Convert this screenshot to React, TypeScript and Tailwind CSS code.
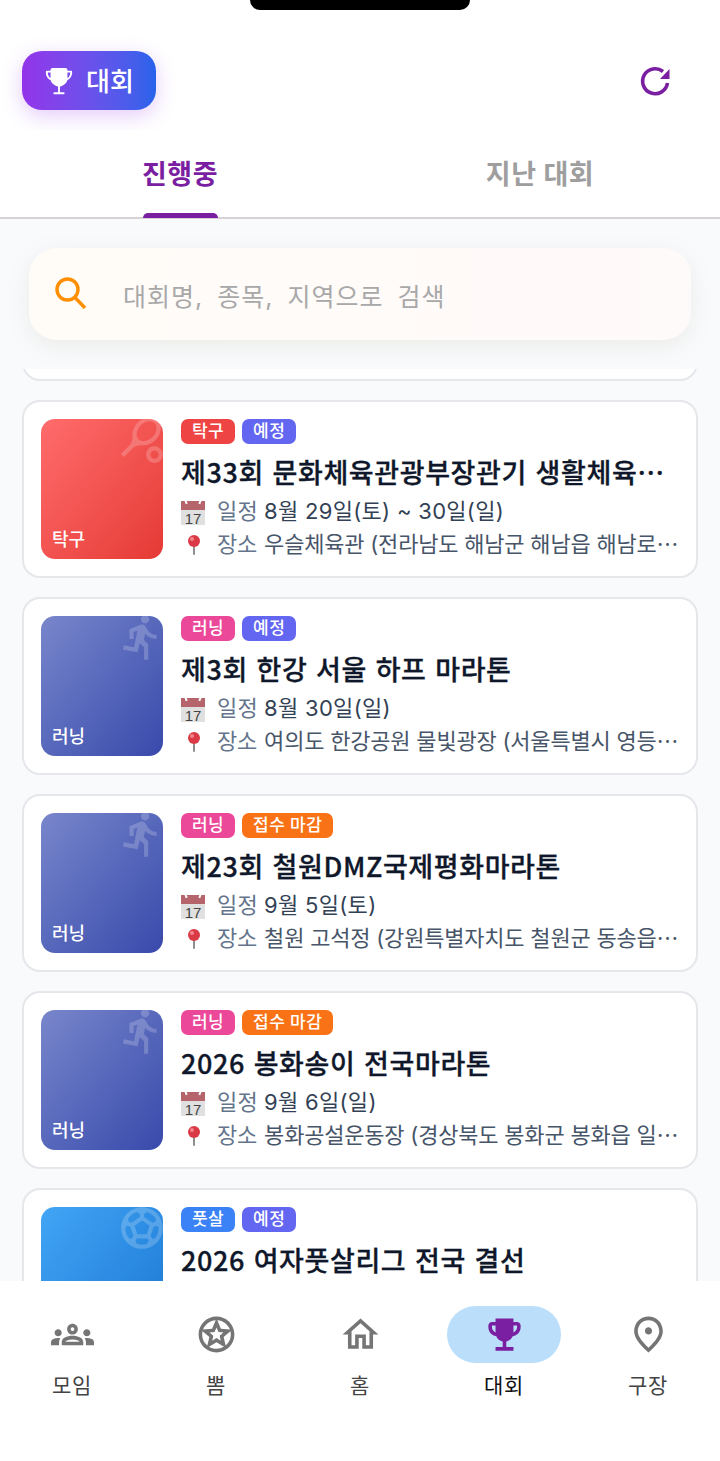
import React from "react";
import {
  MdEmojiEvents,
  MdOutlineGroups,
  MdOutlineStars,
  MdOutlineHome,
  MdOutlinePlace,
  MdSportsTennis,
  MdDirectionsRun,
  MdSportsSoccer,
} from "react-icons/md";
import { IoTrophy } from "react-icons/io5";

type CardData = {
  sport: string;
  status: string;
  sportBadge: string;
  statusBadge: string;
  thumb: string;
  icon: React.ReactNode;
  title: string;
  date: string;
  place: string;
};

const run = <MdDirectionsRun size={50} />;

const cards: CardData[] = [
  {
    sport: "탁구",
    status: "예정",
    sportBadge: "bg-[#ef4444]",
    statusBadge: "bg-[#6366f1]",
    thumb: "from-[#ff6b6b] to-[#e53935]",
    icon: <MdSportsTennis size={50} />,
    title: "제33회 문화체육관광부장관기 생활체육…",
    date: "8월 29일(토) ~ 30일(일)",
    place: "우슬체육관 (전라남도 해남군 해남읍 해남로",
  },
  {
    sport: "러닝",
    status: "예정",
    sportBadge: "bg-[#ec4899]",
    statusBadge: "bg-[#6366f1]",
    thumb: "from-[#7986cb] to-[#3949ab]",
    icon: run,
    title: "제3회 한강 서울 하프 마라톤",
    date: "8월 30일(일)",
    place: "여의도 한강공원 물빛광장 (서울특별시 영등",
  },
  {
    sport: "러닝",
    status: "접수 마감",
    sportBadge: "bg-[#ec4899]",
    statusBadge: "bg-[#f97316]",
    thumb: "from-[#7986cb] to-[#3949ab]",
    icon: run,
    title: "제23회 철원DMZ국제평화마라톤",
    date: "9월 5일(토)",
    place: "철원 고석정 (강원특별자치도 철원군 동송읍",
  },
  {
    sport: "러닝",
    status: "접수 마감",
    sportBadge: "bg-[#ec4899]",
    statusBadge: "bg-[#f97316]",
    thumb: "from-[#7986cb] to-[#3949ab]",
    icon: run,
    title: "2026 봉화송이 전국마라톤",
    date: "9월 6일(일)",
    place: "봉화공설운동장 (경상북도 봉화군 봉화읍 일",
  },
  {
    sport: "풋살",
    status: "예정",
    sportBadge: "bg-[#3b82f6]",
    statusBadge: "bg-[#6366f1]",
    thumb: "from-[#42a5f5] to-[#1976d2]",
    icon: <MdSportsSoccer size={50} />,
    title: "2026 여자풋살리그 전국 결선",
    date: "",
    place: "",
  },
];

function CalendarIcon() {
  return (
    <svg width="24" height="24" viewBox="0 0 24 24" className="shrink-0 mt-[3px]">
      <rect x="0" y="0" width="24" height="24" fill="#e0e0e0" />
      <rect x="0" y="0" width="24" height="9" fill="#b5646c" />
      <rect x="4" y="-1" width="2" height="4" fill="#fff" transform="rotate(-20 5 1)" />
      <rect x="18" y="-1" width="2" height="4" fill="#fff" transform="rotate(20 19 1)" />
      <text x="12" y="22.5" textAnchor="middle" fontSize="15" fill="#444" fontFamily="'Liberation Sans', sans-serif">
        17
      </text>
    </svg>
  );
}

function PinIcon() {
  return (
    <svg width="24" height="24" viewBox="0 0 24 24" className="shrink-0">
      <rect x="12" y="13" width="2" height="11" rx="1" fill="#8f8f8f" />
      <circle cx="13" cy="10" r="6" fill="#d93a46" />
      <circle cx="11" cy="8" r="2" fill="#f2848c" />
    </svg>
  );
}

function Card({ c }: { c: CardData }) {
  return (
    <div className="h-[178px] shrink-0 rounded-[18px] border-2 border-[#e5e7eb] bg-white p-[17px] flex gap-[18px]">
      <div className={`relative w-[122px] h-[140px] shrink-0 overflow-hidden rounded-[14px] bg-gradient-to-br ${c.thumb}`}>
        <div className="absolute -top-[4px] -right-[4px] text-white opacity-20">{c.icon}</div>
        <span className="absolute left-[11px] bottom-[6px] text-[18px] leading-[26px] font-medium text-white">{c.sport}</span>
      </div>
      <div className="min-w-0 flex-1 flex flex-col">
        <div className="flex gap-[7px]">
          <span className={`h-[25px] min-w-[54px] px-[11px] flex items-center justify-center rounded-[7px] text-[17px] tracking-[0.4px] font-medium text-white ${c.sportBadge}`}>{c.sport}</span>
          <span className={`h-[25px] min-w-[54px] px-[11px] flex items-center justify-center rounded-[7px] text-[17px] tracking-[0.4px] font-medium text-white ${c.statusBadge}`}>{c.status}</span>
        </div>
        <div className="mt-[10px] whitespace-nowrap font-['Noto_Sans_CJK_KR'] text-[27px] leading-[36px] font-medium tracking-[0.6px] [word-spacing:2px] [-webkit-text-stroke:0.3px_#0f172a] text-[#0f172a]">{c.title}</div>
        {c.date && (
          <>
            <div className="mt-[6px] h-[30px] flex items-center gap-[12px] text-[22px]">
              <CalendarIcon />
              <div className="min-w-0 whitespace-nowrap tracking-[0.3px] text-[#334155]"><span className="text-[#64748b] mr-[6px]">일정</span>{c.date}</div>
            </div>
            <div className="mt-[2px] h-[30px] flex items-center gap-[12px] text-[22px]">
              <PinIcon />
              <div className="min-w-0 whitespace-nowrap tracking-[-0.2px] text-[#475569]">
                <span className="text-[#64748b] mr-[7px]">장소</span>
                {c.place}
                <span className="font-['Noto_Sans_CJK_KR']">…</span>
              </div>
            </div>
          </>
        )}
      </div>
    </div>
  );
}

const nav = [
  { label: "모임", icon: <MdOutlineGroups size={43} /> },
  { label: "뽐", icon: <MdOutlineStars size={43} /> },
  { label: "홈", icon: <MdOutlineHome size={43} /> },
  { label: "대회", icon: <MdEmojiEvents size={43} />, active: true },
  { label: "구장", icon: <MdOutlinePlace size={43} /> },
];

export default function App() {
  return (
    <div
      className="relative w-[720px] h-[1461px] overflow-hidden flex flex-col bg-[#f8fafc]"
      style={{ fontFamily: "Inter, 'Noto Sans CJK KR', 'Noto Sans', sans-serif" }}
    >
      <div className="absolute top-0 left-[250px] w-[220px] h-[10px] bg-black rounded-b-[18px]" />

      <header className="h-[130px] shrink-0 bg-white pt-[51px] pl-[22px] pr-[48px] flex items-start justify-between">
        <div className="h-[59px] w-[134px] rounded-[20px] bg-gradient-to-r from-[#9333ea] to-[#2563eb] shadow-[0_6px_20px_rgba(147,51,234,0.25)] flex items-center pl-[22px] gap-[12px] text-white">
          <IoTrophy size={30} />
          <span className="mt-[2px] text-[26px] font-medium leading-none">대회</span>
        </div>
        <svg width="34" height="34" viewBox="0 0 34 34" className="mt-[13px]" fill="none">
          <path d="M29.5 19A12.5 12.5 0 1 1 25 7.5" stroke="#7b1fa2" strokeWidth="3.6" />
          <path d="M31.5 5V15H22Z" fill="#7b1fa2" />
        </svg>
      </header>

      <div className="h-[89px] shrink-0 bg-white border-b-2 border-[#d8d2d6] grid grid-cols-2">
        <div className="relative flex justify-center pt-[26px]">
          <span className="text-[27px] tracking-[0.5px] leading-[38px] font-bold text-[#7b1fa2]">진행중</span>
          <div className="absolute left-[143px] -bottom-[1px] w-[75px] h-[5px] rounded-t-[5px] bg-[#7b1fa2]" />
        </div>
        <div className="flex justify-center pt-[26px]">
          <span className="text-[27px] tracking-[0.5px] leading-[38px] font-bold text-[#9e9e9e]">지난 대회</span>
        </div>
      </div>

      <div className="shrink-0 px-[29px] pt-[29px] pb-[29px]">
        <div className="h-[92px] rounded-[28px] bg-gradient-to-r from-[#fffcf8] to-[#fffafa] shadow-[0_6px_22px_rgba(170,150,110,0.14)] flex items-center pl-[26px] gap-[36px]">
          <svg width="32" height="32" viewBox="0 0 32 32" fill="none" className="shrink-0 -mt-[2px]">
            <circle cx="12.5" cy="12.5" r="10.5" stroke="#ff8f00" strokeWidth="3.4" />
            <path d="M20 20.5L30 31" stroke="#ff8f00" strokeWidth="3.4" />
          </svg>
          <span className="mt-[6px] text-[25px] tracking-[1px] [word-spacing:6px] leading-none text-[#a8a8a8]">대회명, 종목, 지역으로 검색</span>
        </div>
      </div>

      <div className="flex-1 min-h-0 overflow-hidden px-[22px]">
        <div className="-mt-[166px] flex flex-col gap-[19px]">
          <div className="h-[178px] shrink-0 rounded-[18px] border-2 border-[#e5e7eb] bg-white" />
          {cards.map((c) => (
            <Card key={c.title} c={c} />
          ))}
        </div>
      </div>

      <nav className="h-[180px] shrink-0 bg-white pt-[25px] grid grid-cols-5 content-start">
        {nav.map((n) => (
          <div key={n.label} className="flex flex-col items-center">
            <div className={`w-[114px] h-[57px] rounded-full flex items-center justify-center ${n.active ? "bg-[#bbdefb] text-[#7b1fa2]" : "text-[#757575]"}`}>
              {n.icon}
            </div>
            <span className={`mt-[9px] text-[21px] tracking-[0.8px] leading-[28px] ${n.active ? "text-[#111]" : "text-[#444]"}`}>{n.label}</span>
          </div>
        ))}
      </nav>
    </div>
  );
}
